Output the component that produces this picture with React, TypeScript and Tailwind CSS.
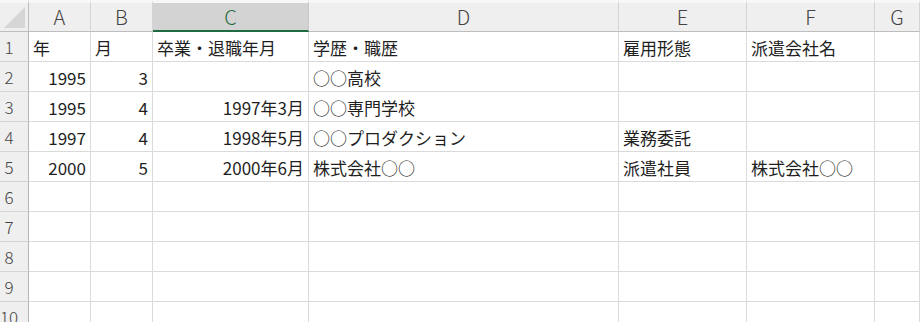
const COLS = ['A', 'B', 'C', 'D', 'E', 'F', 'G'];

// right-aligned cells hold numbers and dates
const ROWS: { v: string; right?: boolean }[][] = [
  [{ v: '年' }, { v: '月' }, { v: '卒業・退職年月' }, { v: '学歴・職歴' }, { v: '雇用形態' }, { v: '派遣会社名' }, { v: '' }],
  [{ v: '1995', right: true }, { v: '3', right: true }, { v: '' }, { v: '○○高校' }, { v: '' }, { v: '' }, { v: '' }],
  [{ v: '1995', right: true }, { v: '4', right: true }, { v: '1997年3月', right: true }, { v: '○○専門学校' }, { v: '' }, { v: '' }, { v: '' }],
  [{ v: '1997', right: true }, { v: '4', right: true }, { v: '1998年5月', right: true }, { v: '○○プロダクション' }, { v: '業務委託' }, { v: '' }, { v: '' }],
  [{ v: '2000', right: true }, { v: '5', right: true }, { v: '2000年6月', right: true }, { v: '株式会社○○' }, { v: '派遣社員' }, { v: '株式会社○○' }, { v: '' }],
  ...Array.from({ length: 5 }, () => COLS.map(() => ({ v: '' }))),
];

export default function App() {
  return (
    <div
      className="w-[920px] h-[322px] overflow-hidden bg-white text-[#1f1f1f]"
      style={{ fontFamily: '"Noto Sans CJK JP", "Noto Sans", sans-serif' }}
    >
      <div className="grid grid-cols-[29px_62px_62px_156px_310px_128px_128px_1fr]">
        {/* corner */}
        <div className="relative h-[32px] bg-[#efefef] border-t-[3px] border-t-[#f7f7f7] border-r border-r-[#bdbdbd] border-b border-b-[#bdbdbd]">
          <svg className="absolute left-0 top-0" width="28" height="28" viewBox="0 0 28 28">
            <polygon points="4,25 25,25 25,4" fill="#d6d6d6" />
          </svg>
        </div>
        {/* column headers */}
        {COLS.map((c) =>
          c === 'C' ? (
            <div
              key={c}
              className="h-[32px] flex items-center justify-center bg-[#d3d3d3] border-t-[3px] border-t-[#f7f7f7] border-r border-r-[#c8c8c8] border-b-2 border-b-[#1f6b41] text-[20px] font-light text-[#1f6b41] leading-none"
            >
              {c}
            </div>
          ) : (
            <div
              key={c}
              className="h-[32px] flex items-center justify-center bg-[#efefef] border-t-[3px] border-t-[#f7f7f7] border-r border-r-[#d4d4d4] border-b border-b-[#bdbdbd] text-[20px] font-light text-[#444] leading-none"
            >
              {c}
            </div>
          )
        )}

        {ROWS.map((row, r) => (
          <div key={r} className="contents">
            <div className="h-[30px] flex items-center justify-center pr-[10px] bg-[#efefef] border-r border-r-[#b4b4b4] border-b border-b-[#d4d4d4] text-[17px] font-light text-[#444] leading-none">
              {r + 1}
            </div>
            {row.map((cell, i) => (
              <div
                key={i}
                className={
                  'h-[30px] flex items-center pt-[2px] px-[4px] border-r border-b border-[#dadada] text-[17px] leading-none whitespace-nowrap overflow-hidden ' +
                  (cell.right ? 'justify-end' : 'justify-start')
                }
              >
                {cell.v}
              </div>
            ))}
          </div>
        ))}
      </div>
    </div>
  );
}
